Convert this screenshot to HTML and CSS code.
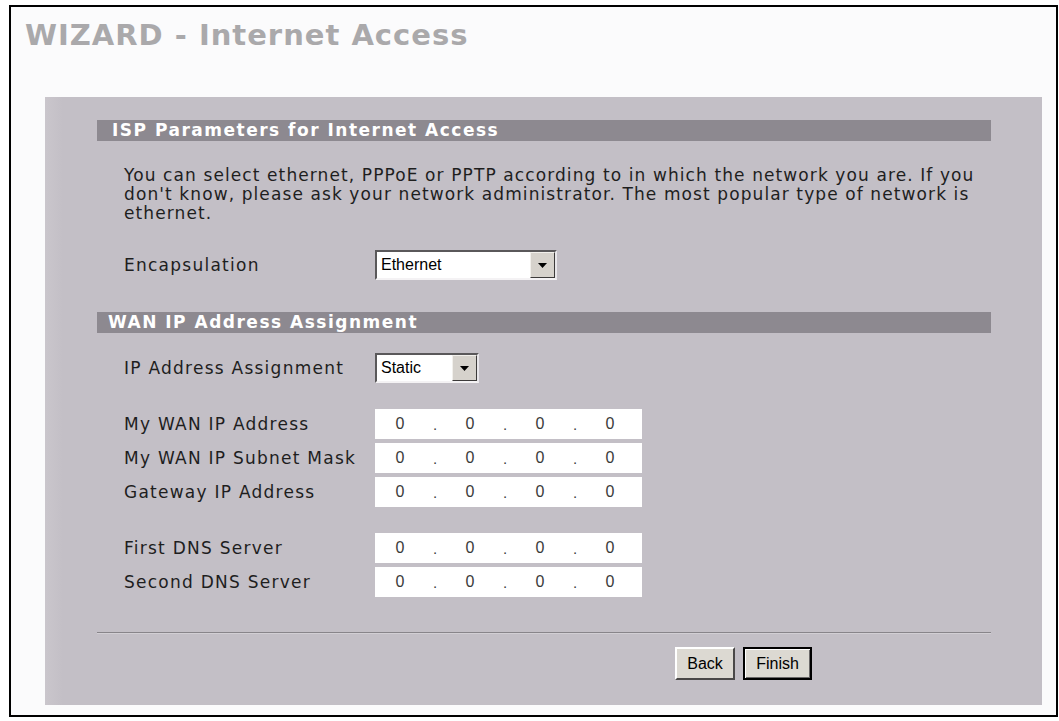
FILE: index.html
```html
<!DOCTYPE html>
<html lang="en">
<head>
<meta charset="utf-8">
<title>WIZARD - Internet Access</title>
<link rel="stylesheet" href="styles.css">
</head>
<body>
<div class="frame">
  <h1 class="title">WIZARD - Internet Access</h1>
  <form class="panel">
    <div class="section-bar">ISP Parameters for Internet Access</div>
    <p class="intro">You can select ethernet, PPPoE or PPTP according to in which the network you are. If you<br>don't know, please ask your network administrator. The most popular type of network is<br>ethernet.</p>
    <div class="field field-encap">
      <span class="label">Encapsulation</span>
      <div class="select select-wide">
        <span class="select-value">Ethernet</span>
        <span class="select-btn"><svg width="9" height="5" viewBox="0 0 9 5"><path d="M0 0H9L4.5 5Z" fill="#000"/></svg></span>
      </div>
    </div>

    <div class="section-bar section-wan">WAN IP Address Assignment</div>
    <div class="field field-assign">
      <span class="label">IP Address Assignment</span>
      <div class="select select-narrow">
        <span class="select-value">Static</span>
        <span class="select-btn"><svg width="9" height="5" viewBox="0 0 9 5"><path d="M0 0H9L4.5 5Z" fill="#000"/></svg></span>
      </div>
    </div>

    <div class="ip-group">
      <div class="field ip-row">
        <span class="label">My WAN IP Address</span>
        <div class="ip-box"><input class="octet" value="0"><span class="dot">.</span><input class="octet" value="0"><span class="dot">.</span><input class="octet" value="0"><span class="dot">.</span><input class="octet" value="0"></div>
      </div>
      <div class="field ip-row">
        <span class="label">My WAN IP Subnet Mask</span>
        <div class="ip-box"><input class="octet" value="0"><span class="dot">.</span><input class="octet" value="0"><span class="dot">.</span><input class="octet" value="0"><span class="dot">.</span><input class="octet" value="0"></div>
      </div>
      <div class="field ip-row">
        <span class="label">Gateway IP Address</span>
        <div class="ip-box"><input class="octet" value="0"><span class="dot">.</span><input class="octet" value="0"><span class="dot">.</span><input class="octet" value="0"><span class="dot">.</span><input class="octet" value="0"></div>
      </div>
    </div>

    <div class="ip-group ip-group-dns">
      <div class="field ip-row">
        <span class="label">First DNS Server</span>
        <div class="ip-box"><input class="octet" value="0"><span class="dot">.</span><input class="octet" value="0"><span class="dot">.</span><input class="octet" value="0"><span class="dot">.</span><input class="octet" value="0"></div>
      </div>
      <div class="field ip-row">
        <span class="label">Second DNS Server</span>
        <div class="ip-box"><input class="octet" value="0"><span class="dot">.</span><input class="octet" value="0"><span class="dot">.</span><input class="octet" value="0"><span class="dot">.</span><input class="octet" value="0"></div>
      </div>
    </div>

    <hr class="divider">
    <div class="actions">
      <button type="button" class="btn">Back</button>
      <button type="button" class="btn btn-default">Finish</button>
    </div>
  </form>
</div>
</body>
</html>
```

FILE: styles.css
```css
html, body {
  margin: 0;
  padding: 0;
  background: #ffffff;
}

body {
  font-family: "DejaVu Sans", Verdana, sans-serif;
  color: #1e1e1e;
}

/* outer window frame */
.frame {
  margin: 5px 1px 0 9px;
  height: 708px;
  border: 2px solid #000;
  background: #fbfbfc;
  display: flex;
  flex-direction: column;
}

.title {
  margin: 11px 0 0 14px;
  font-family: "DejaVu Sans", Verdana, sans-serif;
  font-weight: bold;
  font-size: 29px;
  line-height: 34px;
  color: #aaa9ab;
  letter-spacing: 1px;
}

/* grey content panel */
.panel {
  margin: 45px 14px 0 34px;
  height: 608px;
  box-sizing: border-box;
  padding: 23px 51px 0 52px;
  background: linear-gradient(to right, #cac6cc 0, #c3bfc6 18px, #c3bfc6 100%);
  display: flex;
  flex-direction: column;
}

.section-bar {
  height: 21px;
  line-height: 21px;
  background: #8d8990;
  color: #ffffff;
  font-weight: bold;
  font-size: 17px;
  padding-left: 15px;
  letter-spacing: 1.5px;
}

.section-wan {
  margin-top: 32px;
  padding-left: 11px;
}

.intro {
  margin: 25px 0 0 27px;
  font-size: 17px;
  line-height: 19px;
  letter-spacing: 1.1px;
  white-space: nowrap;
}

.field {
  display: flex;
  align-items: center;
  padding-left: 27px;
  height: 30px;
}

.label {
  width: 251px;
  flex: none;
  font-size: 17px;
  letter-spacing: 1.25px;
  white-space: nowrap;
}

.field-encap {
  margin-top: 27px;
}

.field-assign {
  margin-top: 20px;
}

/* classic inset drop-down */
.select {
  box-sizing: border-box;
  height: 30px;
  display: flex;
  align-items: stretch;
  background: #ffffff;
  border-style: solid;
  border-width: 2px;
  border-color: #5a585a #e8e6ea #f4f2f4 #5a585a;
}

.select-wide { width: 182px; }
.select-narrow { width: 104px; }

.select-value {
  flex: 1;
  padding-left: 4px;
  font-family: "Liberation Sans", Arial, sans-serif;
  font-size: 16px;
  line-height: 26px;
  color: #000;
}

.select-btn {
  width: 25px;
  box-sizing: border-box;
  background: #d6d2cc;
  border-style: solid;
  border-width: 1px;
  border-color: #f2f0ec #3c3a3a #3c3a3a #f2f0ec;
  display: flex;
  align-items: center;
  justify-content: center;
}

/* IP address rows */
.ip-group {
  margin-top: 26px;
  display: flex;
  flex-direction: column;
  gap: 4px;
}

.ip-box {
  width: 267px;
  height: 30px;
  background: #ffffff;
  display: flex;
  align-items: center;
}

.octet {
  width: 50px;
  border: 0;
  padding: 0;
  margin: 0;
  background: transparent;
  text-align: center;
  font-family: "Liberation Sans", Arial, sans-serif;
  font-size: 16px;
  color: #3a3a3a;
  outline: none;
}

.dot {
  width: 20px;
  text-align: center;
  font-family: "Liberation Sans", Arial, sans-serif;
  font-size: 15px;
  color: #3a3a3a;
}

.divider {
  margin: 35px 0 0 0;
  height: 0;
  border: 0;
  border-top: 1px solid #88858a;
  border-bottom: 1px solid #d2cfd4;
}

.actions {
  margin-top: 13px;
  padding-left: 578px;
  display: flex;
  gap: 8px;
}

.btn {
  height: 33px;
  padding: 0 8px;
  background: #dcd9d2;
  font-family: "Liberation Sans", Arial, sans-serif;
  font-size: 16px;
  color: #000;
  border-style: solid;
  border-width: 2px;
  border-color: #ffffff #4a4848 #4a4848 #ffffff;
}

.btn:first-child {
  width: 60px;
}

.btn-default {
  width: 69px;
  border-width: 2px;
  border-color: #000;
  box-shadow: inset 1px 1px 0 #ffffff, inset -1px -1px 0 #6a6868;
}
```
